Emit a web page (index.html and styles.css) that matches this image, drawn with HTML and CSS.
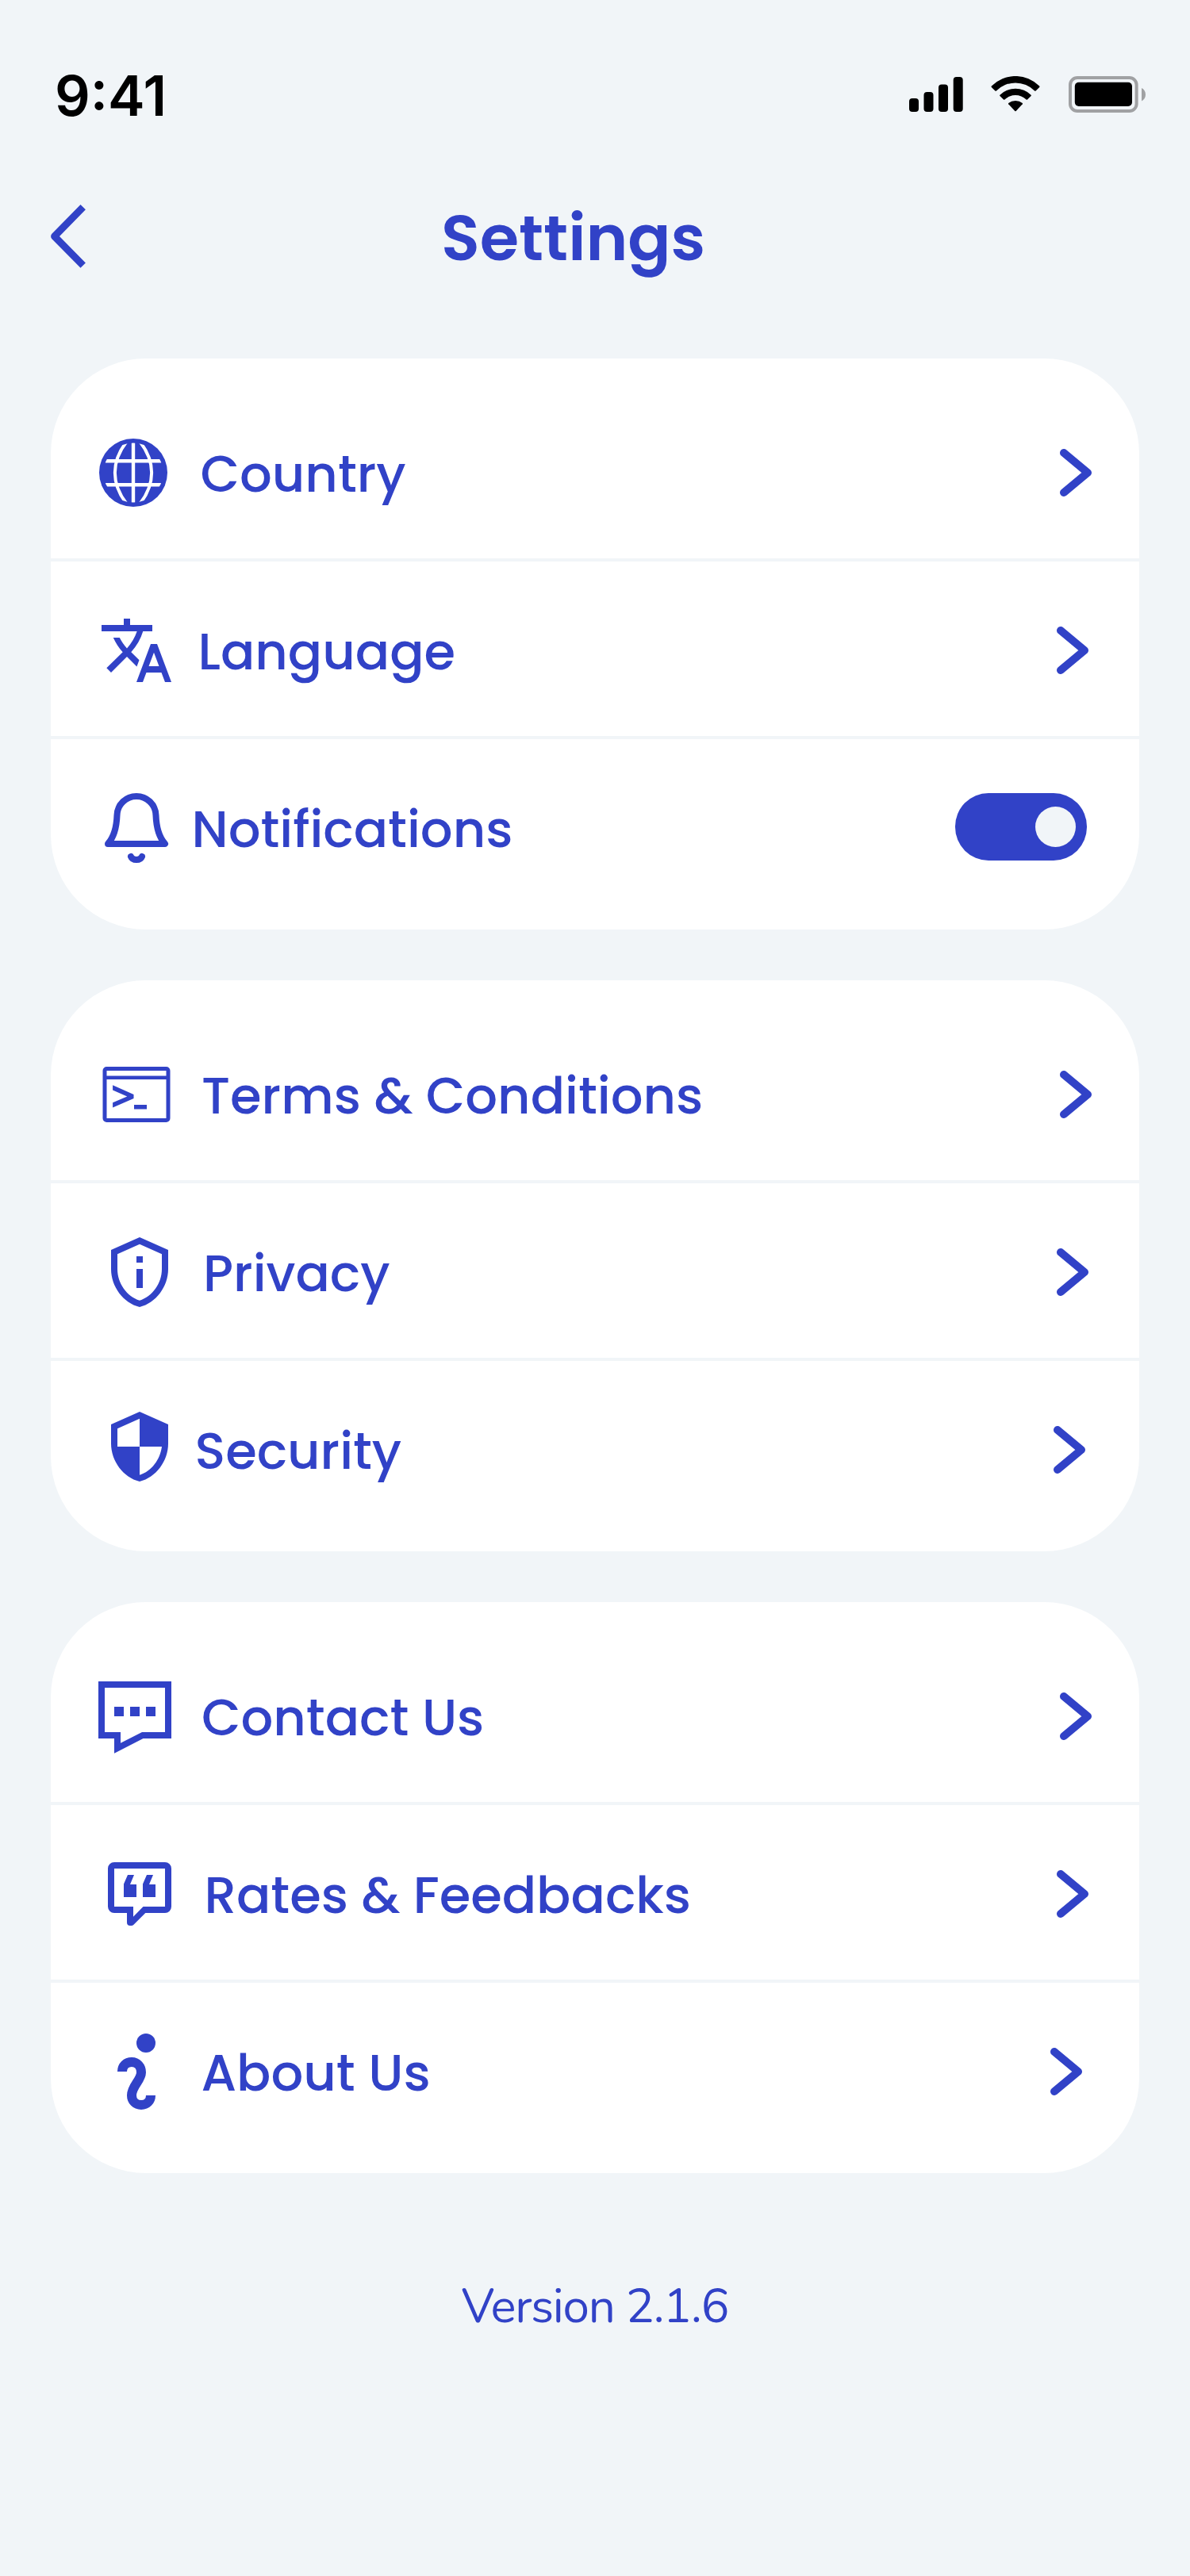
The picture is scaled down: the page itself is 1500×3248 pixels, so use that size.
FILE: index.html
```html
<!DOCTYPE html>
<html lang="en">
<head>
<meta charset="utf-8">
<title>Settings</title>
<link rel="stylesheet" href="styles.css">
</head>
<body>
<div class="status">
  <span class="status-time">9:41</span>
  <div class="status-icons">
    <svg class="signal" viewBox="0 0 68 44"><rect x="0" y="27" width="12" height="17" rx="4"/><rect x="18.5" y="19" width="12" height="25" rx="4"/><rect x="37" y="9.5" width="12" height="34.5" rx="4"/><rect x="55.7" y="0" width="12" height="44" rx="4"/></svg>
    <svg class="wifi" viewBox="0 0 62 45"><path d="M.8 12.5A42.6 42.6 0 0 1 61.2 12.500Q61.8 13.200 61.2 13.900L56.600 18.500Q55.900 19.100 55.100 18.400A34 34 0 0 0 6.900 18.400Q6.100 19.100 5.400 18.500L.8 13.900Q.2 13.200 .8 12.500Z"/><path d="M11.400 23.700A28.200 28.200 0 0 1 50.600 23.700Q51.100 24.400 50.600 25L46 29.600Q45.300 30.100 44.600 29.500A19.600 19.600 0 0 0 17.400 29.500Q16.700 30.100 16 29.600L11.400 25Q10.900 24.400 11.400 23.700Z"/><path d="M22.200 34.100A14 14 0 0 1 39.800 34.100Q40.200 34.700 39.800 35.300L31.700 43.900Q31 44.500 30.300 43.900L22.200 35.300Q21.800 34.700 22.200 34.100Z"/></svg>
    <svg class="battery" viewBox="0 0 98 46"><rect x="2" y="2" width="83.6" height="42" rx="9" fill="none" stroke="#a0a1a3" stroke-width="4"/><rect x="7.8" y="7.8" width="72.2" height="30.2" rx="5"/><path d="M92 15v16.400c3-1.400 5-4.500 5-8.200s-2-6.800-5-8.200z" fill="#a0a1a3"/></svg>
  </div>
</div>

<header class="header">
  <svg class="back" viewBox="0 0 48 84"><path d="M43.700 5.200 7.600 42l36.100 36.600"/></svg>
  <h1 class="title">Settings</h1>
</header>

<main class="groups">
  <section class="card">
    <div class="row">
      <svg class="icon" viewBox="0 0 104 104"><defs><clipPath id="globe"><circle cx="52" cy="52" r="37.500"/></clipPath></defs><circle cx="52" cy="52" r="43" fill="currentColor"/><g clip-path="url(#globe)" fill="none" stroke="#fff" stroke-width="4.400"><path d="M52 10v84M10 37.300h84M10 67.300h84"/><path d="M43.500 13C24 38 24 66 43.500 91M60.500 13C80 38 80 66 60.500 91" stroke-width="4"/></g></svg>
      <span class="label country">Country</span>
      <svg class="chevron" viewBox="0 0 40 60"><path d="M5 5l30 25L5 55"/></svg>
    </div>
    <div class="row">
      <svg class="icon" viewBox="0 0 104 104"><path transform="translate(8 4) scale(4)" fill="currentColor" d="M12.870 15.070l-2.540-2.510.03-.03c1.740-1.940 2.980-4.170 3.710-6.530H17V4h-7V2H8v2H1v1.990h11.170C11.500 7.920 10.440 9.750 9 11.350 8.070 10.320 7.300 9.190 6.690 8h-2c.73 1.630 1.730 3.170 2.980 4.560l-5.090 5.020L4 19l5-5 3.110 3.110.76-2.040zM18.500 10h-2L12 22h2l1.120-3h4.750L21 22h2l-4.500-12zm-2.620 7l1.620-4.330L19.120 17h-3.240z"/></svg>
      <span class="label language">Language</span>
      <svg class="chevron inset-1" viewBox="0 0 40 60"><path d="M5 5l30 25L5 55"/></svg>
    </div>
    <div class="row">
      <svg class="icon" viewBox="0 0 104 104"><path fill="none" stroke="currentColor" stroke-width="8" stroke-linecap="round" stroke-linejoin="round" d="M20 72C28 63 31 50 31.500 36 32 22 43 12 56 12S80 22 80.500 36C81 50 84 63 92 72ZM49 88c2 5.300 12 5.300 14 0"/></svg>
      <span class="label notifications">Notifications</span>
      <span class="toggle"><span class="knob"></span></span>
    </div>
  </section>

  <section class="card">
    <div class="row">
      <svg class="icon" viewBox="0 0 104 104"><rect x="16" y="19.500" width="80" height="65" rx="2.500" fill="none" stroke="currentColor" stroke-width="5"/><path fill="currentColor" d="M17 28.500h78v4.500H17zM26.100 40.200 52.500 52v5L26.100 68.500v-6.200L44.300 54.400 26.100 46.500zM53 65h16v5.500H53z"/></svg>
      <span class="label terms">Terms &amp; Conditions</span>
      <svg class="chevron" viewBox="0 0 40 60"><path d="M5 5l30 25L5 55"/></svg>
    </div>
    <div class="row">
      <svg class="icon" viewBox="0 0 104 104"><path transform="translate(12 4) scale(4)" fill="currentColor" d="M12 3.180l7 3.120V11c0 4.520-2.980 8.690-7 9.930-4.020-1.240-7-5.410-7-9.930V6.300l7-3.120M12 1L3 5v6c0 5.550 3.840 10.740 9 12 5.160-1.260 9-6.450 9-12V5l-9-4zM11 7h2v2h-2zM11 11h2v6h-2z"/></svg>
      <span class="label privacy">Privacy</span>
      <svg class="chevron inset-1" viewBox="0 0 40 60"><path d="M5 5l30 25L5 55"/></svg>
    </div>
    <div class="row">
      <svg class="icon" viewBox="0 0 104 104"><path transform="translate(12 0) scale(4)" fill="currentColor" d="M12 1L3 5v6c0 5.550 3.840 10.740 9 12 5.160-1.260 9-6.450 9-12V5l-9-4zm0 10.990h7c-.53 4.120-3.280 7.790-7 8.940V12H5V6.300l7-3.110v8.800z"/></svg>
      <span class="label security">Security</span>
      <svg class="chevron inset-2" viewBox="0 0 40 60"><path d="M5 5l30 25L5 55"/></svg>
    </div>
  </section>

  <section class="card">
    <div class="row">
      <svg class="icon" viewBox="0 0 104 104"><path fill="currentColor" fill-rule="evenodd" d="M8 8h92v72H64.500L28 98.700V80H8zM16 16v56h20v13.700L63 72h29V16zM28 40h12v12H28zM48 40h12v12H48zM68 40h12v12H68z"/></svg>
      <span class="label contact">Contact Us</span>
      <svg class="chevron" viewBox="0 0 40 60"><path d="M5 5l30 25L5 55"/></svg>
    </div>
    <div class="row">
      <svg class="icon" viewBox="0 0 104 104"><path fill="currentColor" fill-rule="evenodd" d="M28 12h64a8 8 0 0 1 8 8v48a8 8 0 0 1-8 8H67.300L52.500 90.800Q51.300 92 49.600 92H48a4 4 0 0 1-4-4V76H28a8 8 0 0 1-8-8V20a8 8 0 0 1 8-8zM28 20v48h24v12.700L64.500 68H92V20zM40 56V39.500L45 28h8l-5 12h8v16zM64 56V39.500L69 28h8l-5 12h8v16z"/></svg>
      <span class="label rates">Rates &amp; Feedbacks</span>
      <svg class="chevron inset-1" viewBox="0 0 40 60"><path d="M5 5l30 25L5 55"/></svg>
    </div>
    <div class="row">
      <svg class="icon" viewBox="0 0 104 104"><circle cx="68" cy="16" r="12" fill="currentColor"/><path fill="none" stroke="currentColor" stroke-width="12" d="M38 52C38 44.500 43 40 50 40S62 45.500 62 53C62 63 50 70 50 82 50 89 55 94 62 94S74 89 74 82"/></svg>
      <span class="label about">About Us</span>
      <svg class="chevron inset-3" viewBox="0 0 40 60"><path d="M5 5l30 25L5 55"/></svg>
    </div>
  </section>
</main>

<footer class="version">Version 2.1.6</footer>
</body>
</html>
```
FILE: styles.css
```css
* { box-sizing: border-box; }

body {
  margin: 0;
  background: #f1f5f8;
  color: #3142c7;
  font-family: Poppins, Inter, sans-serif;
  min-height: 3248px;
}

svg { display: block; flex: none; }

.status {
  display: flex;
  justify-content: space-between;
  align-items: flex-start;
  height: 236px;
  padding: 81px 55px 0 69px;
  color: #000;
}
.status-time {
  font: 600 70px/80px Inter, sans-serif;
}
.status-icons { display: flex; padding-top: 15px; }
.signal { width: 68px; height: 44px; margin: 1px 35px 0 0; }
.wifi { width: 62px; height: 45px; margin-right: 36px; }
.battery { width: 98px; height: 46px; }

.header {
  display: flex;
  align-items: flex-start;
  height: 216px;
  padding: 20px 0 0 61px;
}
.back {
  width: 48px;
  height: 84px;
  fill: none;
  stroke: currentColor;
  stroke-width: 9;
  stroke-linejoin: round;
}
.title {
  margin: -16px 0 0 447px;
  font-size: 80px;
  line-height: 120px;
  font-weight: 600;
}

.groups {
  display: flex;
  flex-direction: column;
  gap: 64px;
  padding: 0 64px;
}
.card {
  width: 1372px;
  height: 720px;
  border-radius: 120px;
  background: #fff;
}
.row {
  display: flex;
  align-items: center;
  height: 224px;
  padding: 4px 60px 0 52px;
  border-top: 4px solid #f1f5f8;
}
.row:first-child {
  height: 252px;
  padding-top: 36px;
  border-top: 0;
}
.row:last-child { height: 244px; padding-bottom: 20px; }

.icon { width: 104px; height: 104px; }
.label {
  flex: 1;
  padding-top: 4px;
  font-size: 64px;
  line-height: 96px;
  font-weight: 500;
  white-space: nowrap;
}
.country { margin-left: 32.5px; }
.language { margin-left: 29.5px; }
.notifications { margin-left: 21.5px; }
.terms { margin-left: 34px; }
.privacy { margin-left: 36px; }
.security { margin-left: 25.5px; }
.contact { margin-left: 34px; }
.rates { margin-left: 37.5px; }
.about { margin-left: 33.5px; }

.chevron {
  width: 40px;
  height: 60px;
  fill: none;
  stroke: currentColor;
  stroke-width: 10;
  stroke-linecap: round;
  stroke-linejoin: round;
}
.inset-1 { margin-right: 4px; }
.inset-2 { margin-right: 8px; }
.inset-3 { margin-right: 12px; }

.toggle {
  display: flex;
  align-items: center;
  justify-content: flex-end;
  width: 166px;
  height: 85px;
  margin: -3px 6px 0 0;
  padding-right: 14px;
  border-radius: 42px;
  background: #3142c7;
}
.knob {
  width: 51px;
  height: 51px;
  border-radius: 50%;
  background: #f1f5f8;
}

.version {
  margin-top: 128px;
  text-align: center;
  font: 400 60px/80px Nunito, Lato, sans-serif;
  letter-spacing: -0.02em;
}
```
